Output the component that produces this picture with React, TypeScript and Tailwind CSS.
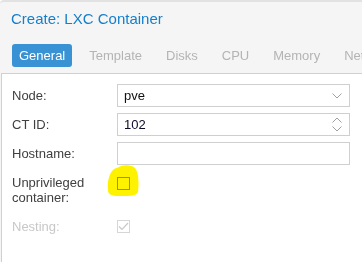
import React from "react";

const ChevronDown = () => (
  <svg width="10" height="6" viewBox="0 0 10 6" className="block">
    <path d="M0.5 0.5 L5 5 L9.5 0.5" fill="none" stroke="#a0a0a0" strokeWidth="1" />
  </svg>
);

const ChevronUp = () => (
  <svg width="10" height="6" viewBox="0 0 10 6" className="block">
    <path d="M0.5 5.5 L5 1 L9.5 5.5" fill="none" stroke="#a0a0a0" strokeWidth="1" />
  </svg>
);

export default function App() {
  const tabs = ["Template", "Disks", "CPU", "Memory", "Network"];
  return (
    <div
      className="relative w-[362px] h-[262px] overflow-hidden bg-[#f5f5f5] border-t-2 border-[#e2e2e2] rounded-tl-[4px] flex flex-col"
      style={{ fontFamily: '"Liberation Sans", Arial, sans-serif' }}
    >
      <div className="pl-[11px] pt-[7px] text-[15px] leading-[20px] text-[#157fcc] whitespace-nowrap">
        Create: LXC Container
      </div>
      <div className="mt-[15px] pl-[12px] flex gap-[10px] whitespace-nowrap">
        <div className="h-[23px] px-[7px] rounded-[3px] bg-[#3892d4] text-white text-[13px] leading-[23px]">
          General
        </div>
        {tabs.map((t) => (
          <div key={t} className="h-[23px] px-[7px] text-[#b4b4b4] text-[13px] leading-[23px]">
            {t}
          </div>
        ))}
      </div>
      <div className="mt-[6px] ml-[1px] flex-1 bg-white border-t border-l border-[#d0d0d0] pt-[10px] pl-[10px] text-[13px] text-[#404040]">
        <div className="flex items-center h-[23px]">
          <div className="w-[105px]">Node:</div>
          <div className="w-[233px] h-[23px] border border-[#cfcfcf] flex items-center pl-[6px] pr-[7px] text-[#111]">
            <span className="flex-1">pve</span>
            <ChevronDown />
          </div>
        </div>
        <div className="mt-[6px] flex items-center h-[23px]">
          <div className="w-[105px]">CT ID:</div>
          <div className="w-[233px] h-[23px] border border-[#cfcfcf] flex items-center pl-[6px] pr-[7px] text-[#0a0a2a]">
            <span className="flex-1">102</span>
            <div className="flex flex-col gap-[3px]">
              <ChevronUp />
              <ChevronDown />
            </div>
          </div>
        </div>
        <div className="mt-[6px] flex items-center h-[23px]">
          <div className="w-[105px]">Hostname:</div>
          <div className="w-[233px] h-[23px] border border-[#cfcfcf]" />
        </div>
        <div className="mt-[6px] flex items-start">
          <div className="w-[105px] pt-[4px] leading-[15px]">
            Unprivileged
            <br />
            container:
          </div>
          <div className="mt-[6px] w-[13px] h-[13px] border border-[#a0a0a0] bg-white" />
        </div>
        <div className="mt-[14px] flex items-start text-[#c8c8c8]">
          <div className="w-[105px] leading-[15px]">Nesting:</div>
          <div className="mt-[1px] w-[13px] h-[13px] border border-[#d6d6d6] bg-white flex items-center justify-center">
            <svg width="11" height="9" viewBox="0 0 11 9">
              <path d="M1 4.5 L4 7.5 L10 1" fill="none" stroke="#c8c8c8" strokeWidth="1.2" />
            </svg>
          </div>
        </div>
      </div>
      <svg
        className="absolute left-0 top-[-2px] pointer-events-none mix-blend-multiply"
        width="362"
        height="262"
        viewBox="0 0 362 262"
      >
        <path
          d="M117 168 C123 164 132 165 135 168 C139 172 139 185 138 192 C137 196 130 196 122 196 C114 196 108 196 108 190 C107 183 109 175 112 171 C114 169 115 168 117 168 Z"
          fill="#fff200"
        />
      </svg>
    </div>
  );
}
